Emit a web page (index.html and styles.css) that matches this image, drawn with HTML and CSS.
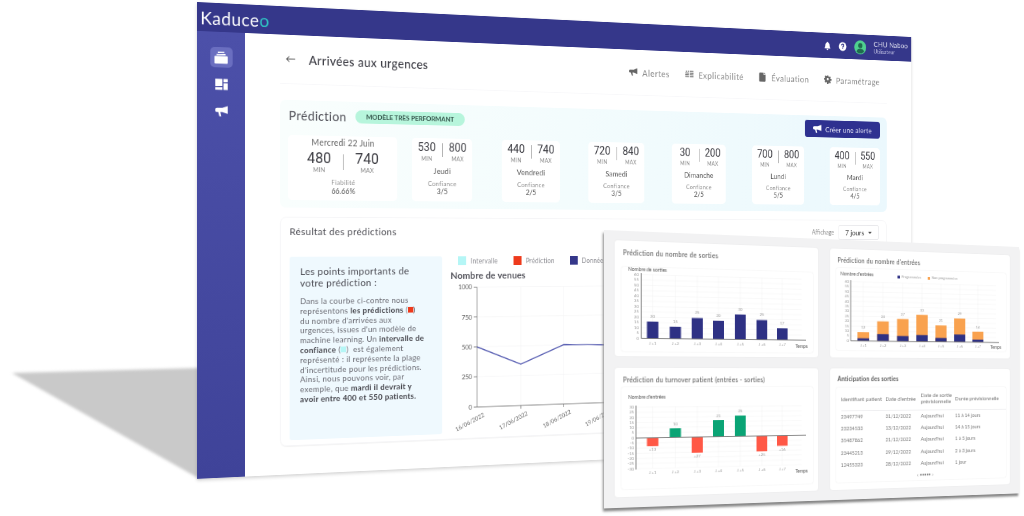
FILE: index.html
```html
<!DOCTYPE html>
<html lang="fr">
<head>
<meta charset="utf-8">
<title>Kaduceo</title>
<link rel="stylesheet" href="styles.css">
</head>
<body>
<div class="stage">
  <svg class="cast-shadow" width="200" height="130" viewBox="0 0 200 130"><polygon points="12,13 200,8 200,119"/></svg>

  <section class="win win-main">
    <header class="topbar">
      <div class="logo">Kaduce<span class="logo-o">o</span></div>
      <div class="top-tools">
        <svg class="ico-top" viewBox="0 0 12 12"><path d="M6 1c.5 0 .8.3.8.8C8.300 2.200 9 3.400 9 5c0 2 .6 3 1.300 3.700V9.300H1.700V8.700C2.400 8 3 7 3 5c0-1.600.7-2.800 2.200-3.200C5.200 1.300 5.500 1 6 1zM4.800 10h2.400a1.200 1.200 0 0 1-2.400 0z"/></svg>
        <svg class="ico-top" viewBox="0 0 12 12"><circle cx="6" cy="6" r="5.500"/><path class="q" d="M4.300 4.700C4.300 3.700 5 3.100 6 3.100s1.700.6 1.700 1.500c0 1.300-1.700 1.300-1.700 2.600M6 8.200v1"/></svg>
        <svg class="avatar" viewBox="0 0 20 20"><circle cx="10" cy="10" r="10" class="av-bg"/><circle cx="10" cy="7.500" r="3.500" class="av-fg"/><path class="av-fg" d="M3.500 16c1-3 3.500-4 6.500-4s5.500 1 6.500 4c-1.700 1.700-4 2.500-6.500 2.500S5.200 17.700 3.500 16z"/></svg>
        <div class="user"><div class="user-name">CHU Naboo</div><div class="user-role">Utilisateur</div></div>
      </div>
    </header>
    <div class="body">
      <nav class="side">
        <div class="side-item side-active">
          <svg viewBox="0 0 16 14"><path d="M4 0h8v1.500H4zM2.500 2.500h11V4h-11zM1 5h14a1 1 0 0 1 1 1v7a1 1 0 0 1-1 1H1a1 1 0 0 1-1-1V6a1 1 0 0 1 1-1z"/></svg>
        </div>
        <div class="side-item">
          <svg viewBox="0 0 16 14"><path d="M0 0h9v9H0zM10.500 0H16v4h-5.500zM10.500 5.500H16V14h-5.500zM0 10.500h9V14H0z"/></svg>
        </div>
        <div class="side-item">
          <svg viewBox="0 0 16 14"><path d="M16 0v10L9 7.800H6.500L7.800 13H5.200L3.800 7.800H2a2 2 0 0 1-2-2V4.500a2 2 0 0 1 2-2h7z"/></svg>
        </div>
      </nav>
      <main class="content">
        <div class="page-head">
          <svg class="back" viewBox="0 0 14 10"><path d="M13 5H1.500M5 1.500 1.500 5 5 8.500"/></svg>
          <h1 class="page-title">Arrivées aux urgences</h1>
          <div class="tabs">
            <div class="tab"><svg viewBox="0 0 16 14"><path d="M16 0v10L9 7.800H6.500L7.800 13H5.200L3.800 7.800H2a2 2 0 0 1-2-2V4.500a2 2 0 0 1 2-2h7z"/></svg>Alertes</div>
            <div class="tab"><svg viewBox="0 0 16 14"><path d="M1 1h2v1.500H1zM5 1h2v1.500H5zM0 4h7v1.500H0zM9 4h7v1.500H9zM0 7h7v1.500H0zM9 7h7v1.500H9zM0 10h7v1.500H0zM9 10h7v1.500H9zM9 1h7v1.500H9z"/></svg>Explicabilité</div>
            <div class="tab"><svg viewBox="0 0 14 16"><path d="M2 0h7v4h4v10a2 2 0 0 1-2 2H2a2 2 0 0 1-2-2V2a2 2 0 0 1 2-2zM10 0l3.500 3H10z"/></svg>Évaluation</div>
            <div class="tab"><svg viewBox="0 0 16 16"><path fill-rule="evenodd" d="M6.500 0h3l.5 2.300 1.300.6 2-1.300 2.100 2.100-1.300 2 .6 1.300 2.300.5v3l-2.300.5-.6 1.300 1.300 2-2.100 2.100-2-1.300-1.300.6-.5 2.300h-3L6 14l-1.300-.6-2 1.300L.6 12.600l1.300-2-.6-1.300L-1 8.800v-3l2.300-.5.6-1.300-1.300-2L2.700 0l2 1.300L6 .7zM8 5a2.500 2.500 0 1 0 0 5 2.500 2.500 0 0 0 0-5z" transform="translate(1 .5) scale(.875)"/></svg>Paramétrage</div>
          </div>
        </div>

        <section class="panel">
          <div class="panel-head">
            <h2 class="panel-title">Prédiction</h2>
            <span class="badge">MODÈLE TRÈS PERFORMANT</span>
            <button class="btn-alert"><svg viewBox="0 0 16 14"><path d="M16 0v10L9 7.800H6.500L7.800 13H5.200L3.800 7.800H2a2 2 0 0 1-2-2V4.500a2 2 0 0 1 2-2h7z"/></svg>Créer une alerte</button>
          </div>
          <div class="days">
            <article class="day day-main">
              <div class="day-date">Mercredi 22 Juin</div>
              <div class="range range-big"><div class="rng"><b>480</b><i>MIN</i></div><span class="sep"></span><div class="rng"><b>740</b><i>MAX</i></div></div>
              <div class="conf">Fiabilité</div>
              <div class="conf-val">66.66%</div>
            </article>
            <article class="day">
              <div class="range"><div class="rng"><b>530</b><i>MIN</i></div><span class="sep"></span><div class="rng"><b>800</b><i>MAX</i></div></div>
              <div class="day-name">Jeudi</div><div class="conf">Confiance</div><div class="conf-val">3/5</div>
            </article>
            <article class="day">
              <div class="range"><div class="rng"><b>440</b><i>MIN</i></div><span class="sep"></span><div class="rng"><b>740</b><i>MAX</i></div></div>
              <div class="day-name">Vendredi</div><div class="conf">Confiance</div><div class="conf-val">2/5</div>
            </article>
            <article class="day">
              <div class="range"><div class="rng"><b>720</b><i>MIN</i></div><span class="sep"></span><div class="rng"><b>840</b><i>MAX</i></div></div>
              <div class="day-name">Samedi</div><div class="conf">Confiance</div><div class="conf-val">3/5</div>
            </article>
            <article class="day">
              <div class="range"><div class="rng"><b>30</b><i>MIN</i></div><span class="sep"></span><div class="rng"><b>200</b><i>MAX</i></div></div>
              <div class="day-name">Dimanche</div><div class="conf">Confiance</div><div class="conf-val">2/5</div>
            </article>
            <article class="day">
              <div class="range"><div class="rng"><b>700</b><i>MIN</i></div><span class="sep"></span><div class="rng"><b>800</b><i>MAX</i></div></div>
              <div class="day-name">Lundi</div><div class="conf">Confiance</div><div class="conf-val">5/5</div>
            </article>
            <article class="day">
              <div class="range"><div class="rng"><b>400</b><i>MIN</i></div><span class="sep"></span><div class="rng"><b>550</b><i>MAX</i></div></div>
              <div class="day-name">Mardi</div><div class="conf">Confiance</div><div class="conf-val">4/5</div>
            </article>
          </div>
        </section>

        <section class="result">
          <div class="result-head">
            <h2 class="result-title">Résultat des prédictions</h2>
            <span class="aff-label">Affichage</span>
            <div class="select">7 jours <span class="caret"></span></div>
          </div>
          <div class="result-body">
            <aside class="info">
              <h3 class="info-title">Les points importants de<br>votre prédiction :</h3>
              <p class="info-text">Dans la courbe ci-contre nous<br>représentons <strong>les prédictions</strong> (<span class="chip chip-red"></span>)<br>du nombre d'arrivées aux<br>urgences, issues d'un modèle de<br>machine learning. Un <strong>intervalle de</strong><br><strong>confiance</strong> (<span class="chip chip-cyan"></span>) &nbsp;est également<br>représenté : il représente la plage<br>d'incertitude pour les prédictions.<br>Ainsi, nous pouvons voir, par<br>exemple, que <strong>mardi il devrait y</strong><br><strong>avoir entre 400 et 550 patients.</strong></p>
            </aside>
            <div class="graph">
              <div class="legend">
                <span class="leg"><span class="sw sw-cyan"></span>Intervalle</span>
                <span class="leg"><span class="sw sw-red"></span>Prédiction</span>
                <span class="leg"><span class="sw sw-blue"></span>Données</span>
              </div>
              <div class="graph-title">Nombre de venues</div>
              <svg class="line-chart" width="320" height="200" viewBox="0 0 320 200">
                <path class="grid" d="M35.500 7.500H320M35.500 44.700H320M35.500 82H320M35.500 119.300H320M95 7.500V157M154.500 7.500V157M214 7.500V157M273.500 7.500V157"/>
                <path class="axis" d="M35.500 7.500V157H320M31 7.500h4.500M31 44.700h4.500M31 82h4.500M31 119.300h4.500M31 157h4.500M95 157v4M154.500 157v4M214 157v4M273.500 157v4"/>
                <g class="tick-y">
                  <text x="29" y="10.500">1000</text><text x="29" y="47.700">750</text><text x="29" y="85">500</text><text x="29" y="122.300">250</text><text x="29" y="160">0</text>
                </g>
                <g class="tick-x">
                  <text transform="translate(46 169) rotate(-25)">16/06/2022</text>
                  <text transform="translate(105 169) rotate(-25)">17/06/2022</text>
                  <text transform="translate(165 169) rotate(-25)">18/06/2022</text>
                  <text transform="translate(224 169) rotate(-25)">19/06/2022</text>
                </g>
                <polyline class="curve" points="35.500,82 95,105 154.500,81.500 214,83 273.500,84 320,84"/>
              </svg>
            </div>
          </div>
        </section>
      </main>
    </div>
  </section>

  <section class="win win-over">
    <article class="card card-tall">
      <h4 class="card-title">Prédiction du nombre de sorties</h4>
      <svg class="mini mini-a" width="209" height="87" viewBox="0 0 209 87">
        <path class="grid" d="M20.500 7.500H196M20.500 13H196M20.500 18.500H196M20.500 24H196M20.500 29.500H196M20.500 35H196M20.500 40.500H196M20.500 46H196M20.500 51.500H196M20.500 57H196M20.500 62.500H196M20.500 68H196M32.500 7.500V73.500M56.500 7.500V73.500M80 7.500V73.500M103 7.500V73.500M127 7.500V73.500M151 7.500V73.500M174 7.500V73.500"/>
        <g class="bar-blue"><rect x="26.500" y="56" width="12" height="17.500"/><rect x="50.500" y="61" width="12" height="12.500"/><rect x="74" y="51.500" width="12" height="22"/><rect x="97" y="54" width="12" height="19.500"/><rect x="121" y="47" width="12" height="26.500"/><rect x="145" y="52.500" width="12" height="21"/><rect x="168" y="61" width="12" height="12.500"/></g>
        <path class="axis" d="M20.500 6V73.500H201"/>
        <text class="mini-lab" x="7" y="3.500">Nombre de sorties</text>
        <g class="tick-y mini-tick"><text x="18" y="9">60</text><text x="18" y="14.500">55</text><text x="18" y="20">50</text><text x="18" y="25.500">45</text><text x="18" y="31">40</text><text x="18" y="36.500">35</text><text x="18" y="42">30</text><text x="18" y="47.500">25</text><text x="18" y="53">20</text><text x="18" y="58.500">15</text><text x="18" y="64">10</text><text x="18" y="69.500">5</text><text x="18" y="75">0</text></g>
        <g class="mid mini-tick"><text x="32.500" y="52">20</text><text x="56.500" y="57">15</text><text x="80" y="47.500">25</text><text x="103" y="50">20</text><text x="127" y="43">30</text><text x="151" y="48.500">25</text><text x="174" y="57">17</text></g>
        <g class="mid mini-tick"><text x="32.500" y="80">J +1</text><text x="56.500" y="80">J +2</text><text x="80" y="80">J +3</text><text x="103" y="80">J +4</text><text x="127" y="80">J +5</text><text x="151" y="80">J +6</text><text x="174" y="80">J +7</text></g>
        <text class="mini-lab" x="189" y="82">Temps</text>
      </svg>
    </article>
    <article class="card">
      <h4 class="card-title">Prédiction du nombre d'entrées</h4>
      <svg class="mini" width="209" height="90" viewBox="0 0 209 90">
        <path class="grid" d="M17 14.700H196M17 20H196M17 25.500H196M17 31H196M17 36.200H196M17 41.600H196M17 47H196M17 52.500H196M17 58H196M17 63.400H196M17 68.800H196M17 74.200H196M32 14.700V79.700M55.500 14.700V79.700M79.500 14.700V79.700M103 14.700V79.700M126.500 14.700V79.700M150 14.700V79.700M173 14.700V79.700"/>
        <g class="bar-orange"><rect x="25" y="70" width="14" height="9.700"/><rect x="48.500" y="57.700" width="14" height="22"/><rect x="72.500" y="54.700" width="14" height="25"/><rect x="96" y="49.700" width="14" height="30"/><rect x="119.500" y="61.200" width="14" height="18.500"/><rect x="143" y="53" width="14" height="26.700"/><rect x="166" y="67.700" width="14" height="12"/></g>
        <g class="bar-blue"><rect x="25" y="76.700" width="14" height="3"/><rect x="48.500" y="71.900" width="14" height="7.800"/><rect x="72.500" y="73.700" width="14" height="6"/><rect x="96" y="72.300" width="14" height="7.400"/><rect x="119.500" y="75.300" width="14" height="4.400"/><rect x="143" y="71.200" width="14" height="8.500"/><rect x="166" y="76.700" width="14" height="3"/></g>
        <path class="axis" d="M17 13V79.700H200"/>
        <text class="mini-lab" x="5" y="8">Nombre d'entrées</text>
        <rect class="fill-blue" x="73" y="6.500" width="3" height="3"/><text class="mini-tick legend-mini" x="78" y="9.500">Programmées</text>
        <rect class="fill-orange" x="110" y="7" width="3" height="3"/><text class="mini-tick legend-mini" x="115" y="9.500">Non programmées</text>
        <g class="tick-y mini-tick"><text x="15" y="16">60</text><text x="15" y="21.500">55</text><text x="15" y="27">50</text><text x="15" y="32.500">45</text><text x="15" y="38">40</text><text x="15" y="43">35</text><text x="15" y="48.500">30</text><text x="15" y="54">25</text><text x="15" y="59.500">20</text><text x="15" y="65">15</text><text x="15" y="70">10</text><text x="15" y="75.500">5</text><text x="15" y="81">0</text></g>
        <g class="mid mini-tick"><text x="32" y="66">12</text><text x="55.500" y="54">24</text><text x="79.500" y="51">27</text><text x="103" y="46">33</text><text x="126.500" y="57.500">21</text><text x="150" y="49.500">29</text><text x="173" y="64">14</text></g>
        <g class="mid mini-tick"><text x="32" y="86">J +1</text><text x="55.500" y="86">J +2</text><text x="79.500" y="86">J +3</text><text x="103" y="86">J +4</text><text x="126.500" y="86">J +5</text><text x="150" y="86">J +6</text><text x="173" y="86">J +7</text></g>
        <text class="mini-lab" x="189" y="87">Temps</text>
      </svg>
    </article>
    <article class="card">
      <h4 class="card-title">Prédiction du turnover patient (entrées - sorties)</h4>
      <svg class="mini" width="209" height="105" viewBox="0 0 209 105">
        <path class="grid" d="M15 20.700H196M15 26H196M15 31.300H196M15 36.600H196M15 41.900H196M15 47.200H196M15 57.800H196M15 63.100H196M15 68.400H196M15 73.700H196M15 79H196M15 84.300H196M32.500 20V84M56.500 20V84M80 20V84M103 20V84M127 20V84M151 20V84M174 20V84"/>
        <g class="bar-red"><rect x="26.500" y="52.500" width="12" height="8.700"/><rect x="74" y="52.500" width="12" height="16.500"/><rect x="145" y="52.500" width="12" height="16.500"/><rect x="168" y="52.500" width="12" height="11"/></g>
        <g class="bar-green"><rect x="50.500" y="43" width="12" height="9.500"/><rect x="97" y="35" width="12" height="17.500"/><rect x="121" y="30.500" width="12" height="22"/></g>
        <path class="axis" d="M15 19V85M15 52.500H201"/>
        <text class="mini-lab" x="7" y="12">Nombre d'entrées</text>
        <g class="tick-y mini-tick"><text x="13" y="22">30</text><text x="13" y="27.300">25</text><text x="13" y="32.600">20</text><text x="13" y="37.900">15</text><text x="13" y="43.200">10</text><text x="13" y="48.500">5</text><text x="13" y="54">0</text><text x="13" y="59.100">-5</text><text x="13" y="64.400">-10</text><text x="13" y="69.700">-15</text><text x="13" y="75">-20</text><text x="13" y="80.300">-25</text><text x="13" y="85.600">-30</text></g>
        <g class="mid mini-tick"><text x="32.500" y="66">+13</text><text x="56.500" y="40">10</text><text x="80" y="74">+27</text><text x="103" y="32">21</text><text x="127" y="27">25</text><text x="151" y="74">+25</text><text x="174" y="69">+16</text></g>
        <g class="mid mini-tick"><text x="32.500" y="90">J +1</text><text x="56.500" y="90">J +2</text><text x="80" y="90">J +3</text><text x="103" y="90">J +4</text><text x="127" y="90">J +5</text><text x="151" y="90">J +6</text><text x="174" y="90">J +7</text></g>
        <text class="mini-lab" x="189" y="93">Temps</text>
      </svg>
    </article>
    <article class="card">
      <h4 class="card-title card-title-strong">Anticipation des sorties</h4>
      <div class="table-box">
        <table class="tbl">
          <thead><tr><th>Identifiant patient</th><th>Date d'entrée</th><th>Date de sortie prévisionnelle</th><th>Durée prévisionnelle</th></tr></thead>
          <tbody>
            <tr><td>23497749</td><td>31/12/2022</td><td>Aujourd'hui</td><td>11 à 14 jours</td></tr>
            <tr><td>23234533</td><td>13/12/2022</td><td>Aujourd'hui</td><td>14 à 15 jours</td></tr>
            <tr><td>35487862</td><td>21/12/2022</td><td>Aujourd'hui</td><td>1 à 5 jours</td></tr>
            <tr><td>23445213</td><td>29/12/2022</td><td>Aujourd'hui</td><td>2 à 3 jours</td></tr>
            <tr><td>12455323</td><td>28/12/2022</td><td>Aujourd'hui</td><td>1 jour</td></tr>
          </tbody>
        </table>
        <div class="pager">‹ <span class="dots">•••••</span> ›</div>
      </div>
    </article>
  </section>
</div>
</body>
</html>
```
FILE: styles.css
```css
* { box-sizing: border-box; }
html, body { margin: 0; padding: 0; background: #fff; }
body { font-family: "Lato", "Liberation Sans", sans-serif; color: #555; }
.stage { position: relative; width: 1024px; height: 516px; overflow: hidden; background: #fff; }

.cast-shadow { position: absolute; left: 0; top: 360px; filter: blur(1.5px); }
.cast-shadow polygon { fill: #c9c9c9; }

.win { position: absolute; transform-origin: 0 0; background: #fff; }
.win-main {
  left: 197px; top: 2px; width: 1000px; height: 561px;
  transform: matrix3d(.835,.0409,0,.000169, 0,.85,0,0, 0,0,1,0, 0,0,0,1);
  box-shadow: 0 2px 4px rgba(0,0,0,.18);
  filter: blur(.7px);
  display: flex; flex-direction: column;
}
.win-over {
  left: 604px; top: 230px; width: 480px; height: 285px;
  transform: matrix3d(.977,.04,0,.000271, 0,.977,0,0, 0,0,1,0, 0,0,0,1);
  background: #f2f2f3;
  box-shadow: -1.5px 2.5px 2.5px #858585;
  padding: 10px 11px 11px;
  display: grid; grid-template-columns: 222px 221px; grid-template-rows: 119px 133px; column-gap: 14px; row-gap: 12px;
  filter: blur(.75px);
}

.topbar { height: 34px; flex: none; background: #35378a; display: flex; align-items: center; padding: 0 4px 0 4px; }
.logo { font-size: 21px; font-weight: 400; color: #fff; letter-spacing: .5px; line-height: 1; }
.logo-o { color: #2fc6c4; }
.top-tools { margin-left: auto; display: flex; align-items: center; }
.ico-top { width: 13px; height: 13px; fill: #fff; margin-right: 11px; }
.ico-top .q { fill: none; stroke: #35378a; stroke-width: 1.4; }
.avatar { width: 19px; height: 19px; margin-right: 12px; margin-left: 1px; }
.av-bg { fill: #4fd08f; }
.av-fg { fill: #1f6b4e; }
.user { width: 57px; }
.user-name { font-size: 10px; line-height: 11px; color: #e6e6f4; letter-spacing: .2px; white-space: nowrap; }
.user-role { font-size: 7.5px; line-height: 9px; color: #b9bade; }

.body { flex: 1; display: flex; min-height: 0; }
.side { width: 58px; flex: none; background: linear-gradient(#4c50a9, #3f4399); padding-top: 18px; display: flex; flex-direction: column; align-items: center; gap: 8px; }
.side-item { width: 27px; height: 24px; display: flex; align-items: center; justify-content: center; }
.side-item svg { width: 15px; height: 14px; fill: #fff; }
.side-active { background: #6a6ec0; border-radius: 5px; }
.side-active svg { width: 16px; height: 15px; }

.content { flex: 1; min-width: 0; padding: 0 40px 0 43px; }
.page-head { height: 59px; display: flex; align-items: center; padding: 0 11px 0 7px; border-bottom: 1px solid #f8f8fa; }
.back { width: 13px; height: 10px; fill: none; stroke: #555; stroke-width: 1.1; flex: none; }
.page-title { margin: 0 0 0 16px; font-size: 15px; font-weight: 500; letter-spacing: .4px; color: #3d3d45; }
.tabs { margin-left: auto; display: flex; gap: 23px; }
.tab { display: flex; align-items: center; gap: 7px; font-size: 11.5px; color: #8a8a8a; letter-spacing: .6px; white-space: nowrap; }
.tab svg { width: 12px; height: 12px; fill: #666; flex: none; }

.panel { margin-top: 19px; height: 129px; border-radius: 7px; background: linear-gradient(90deg, #f9fefd, #f3fcfd 45%, #ebf8fd); padding: 6px 9px 9px 10px; display: flex; flex-direction: column; }
.panel-head { height: 23px; display: flex; align-items: center; margin-bottom: 13px; }
.panel-title { margin: 0; padding-left: 1px; font-size: 15.2px; font-weight: 400; letter-spacing: .5px; color: #4a4a52; }
.badge { margin-left: 11px; height: 16px; width: 143px; border-radius: 8px; background: #b7f5dc; font-size: 8.3px; font-weight: 700; color: #33544a; display: flex; align-items: center; justify-content: center; white-space: nowrap; }
.btn-alert { margin-left: auto; margin-right: 2px; height: 23px; width: 119px; border: 0; border-radius: 4px; background: #2e3190; color: #e8e8f8; font-family: inherit; font-size: 10px; letter-spacing: .2px; display: flex; align-items: center; justify-content: center; gap: 6px; padding: 0; }
.btn-alert svg { width: 13px; height: 12px; fill: #fff; }

.days { flex: 1; display: flex; gap: 40px; }
.day { width: 80px; height: 78px; flex: none; background: #fff; border-radius: 5px; display: flex; flex-direction: column; align-items: center; padding-top: 3px; }
.day-main { width: 139px; padding-top: 2px; margin-right: -21px; }
.day-date { font-size: 10.5px; line-height: 12px; color: #666; letter-spacing: .2px; }
.range { display: flex; align-items: flex-start; justify-content: center; width: 100%; }
.rng { display: flex; flex-direction: column; align-items: center; width: 36px; }
.rng b { font-family: "Roboto", "Liberation Sans", sans-serif; font-weight: 400; font-size: 14px; line-height: 17px; color: #3a3a40; }
.rng i { font-style: normal; font-size: 7px; line-height: 9px; margin-top: 1px; color: #888; letter-spacing: .2px; }
.sep { width: 1px; height: 17px; background: #aaa; margin: 3px 2px 0; }
.range-big { margin-top: 3px; }
.range-big .rng { width: 50px; }
.range-big .rng b { font-size: 18px; line-height: 20px; }
.range-big .rng i { margin-top: 0; font-size: 7.5px; line-height: 9px; }
.range-big .sep { height: 19px; margin: 5px 5px 0; }
.day-name { font-size: 9.5px; line-height: 11px; margin-top: 5px; color: #555; letter-spacing: .2px; }
.conf { font-size: 8px; line-height: 10px; color: #8f8f8f; margin-top: 5px; letter-spacing: .3px; }
.conf-val { font-size: 9px; line-height: 9px; color: #555; }
.day-main .conf-val { margin-top: 1px; }

.result { margin-top: 11px; height: 275px; border: 1px solid #f5f5f7; border-radius: 8px; box-shadow: 0 1px 1px rgba(0,0,0,.05); padding: 6px 12px 6px 11px; display: flex; flex-direction: column; }
.result-head { display: flex; align-items: center; height: 20px; }
.result-title { margin: 0; font-size: 12.1px; font-weight: 400; letter-spacing: .4px; color: #4b4b52; }
.aff-label { margin-left: auto; font-size: 8.5px; color: #888; margin-right: 7px; }
.select { width: 64px; height: 20px; border: 1px solid #e9e9ec; border-radius: 2px; background: #fff; font-size: 10px; color: #444; display: flex; align-items: center; justify-content: center; gap: 7px; }
.caret { width: 0; height: 0; border-left: 3px solid transparent; border-right: 3px solid transparent; border-top: 3px solid #444; }
.result-body { flex: 1; display: flex; margin-top: 21px; min-height: 0; gap: 11px; }
.info { width: 196px; height: 220px; flex: none; background: #eff9fe; border-radius: 3px; padding: 11px 5px 0 13px; }
.info-title { margin: 0; font-size: 12.3px; font-weight: 400; line-height: 14px; letter-spacing: .3px; color: #4a4a52; }
.info-text { margin: 9px 0 0; font-size: 10px; line-height: 11.8px; letter-spacing: .28px; color: #6a6a72; white-space: nowrap; }
.info-text strong { font-weight: 700; color: #45454c; }
.chip { display: inline-block; width: 7px; height: 7px; vertical-align: -.5px; }
.chip-red { background: #ee3a1c; }
.chip-cyan { background: #b5f6f6; }

.graph { flex: 1; min-width: 0; overflow: hidden; }
.legend { display: flex; gap: 21px; padding-left: 10px; height: 11px; align-items: center; white-space: nowrap; }
.leg { display: flex; align-items: center; gap: 6px; font-size: 8.5px; letter-spacing: .2px; color: #8a8a90; }
.sw { width: 11px; height: 11px; flex: none; }
.sw-cyan { background: #b5f6f6; }
.sw-red { background: #ee3a1c; }
.sw-blue { background: #35378a; }
.graph-title { margin-top: 6px; height: 14px; line-height: 14px; font-size: 12px; font-weight: 700; color: #56565e; letter-spacing: .1px; }
.line-chart { display: block; }
.line-chart .tick-y text { font-size: 8px; fill: #555; text-anchor: end; }
.line-chart .tick-x text { font-size: 7.6px; fill: #666; text-anchor: end; }
.grid { fill: none; stroke: #f1f1f3; stroke-width: .6; }
.axis { fill: none; stroke: #666; stroke-width: .8; }
.curve { fill: none; stroke: #5c62b4; stroke-width: 1.4; }

.card { background: #fff; border-radius: 3px; padding: 6px 6.5px 8px; display: flex; flex-direction: column; min-width: 0; box-shadow: 0 0 2px rgba(0,0,0,.06); }
.card-tall { padding-bottom: 5px; }
.card-title { margin: 0; padding-left: 2px; font-size: 6.8px; line-height: 12px; font-weight: 400; letter-spacing: .2px; color: #555; white-space: nowrap; }
.card-title-strong { font-weight: 700; font-size: 6.5px; }
.mini { display: block; margin-top: auto; box-shadow: 0 0 1.5px rgba(0,0,0,.12); border-radius: 2px; background: #fff; }
.mini text { font-family: "Lato", "Liberation Sans", sans-serif; }
.mini .grid { stroke: #f0f0f0; stroke-width: .4; }
.mini .axis { stroke: #777; stroke-width: .9; }
.mini-lab { font-size: 5px; fill: #555; }
.mini-tick { font-size: 4.2px; fill: #999; }
.legend-mini { font-size: 4px; }
.tick-y { text-anchor: end; }
.mid { text-anchor: middle; }
.bar-blue rect, .fill-blue { fill: #2e3184; }
.bar-orange rect, .fill-orange { fill: #f9a24f; }
.bar-red rect { fill: #ff5846; }
.bar-green rect { fill: #0aa475; }

.table-box { margin-top: auto; width: 209px; height: 104px; padding-left: 6px; border-radius: 2px; box-shadow: 0 0 1.5px rgba(0,0,0,.12); display: flex; flex-direction: column; }
.tbl { width: 100%; border-collapse: collapse; table-layout: fixed; font-size: 5.6px; color: #777; }
.tbl th { font-weight: 400; font-size: 6.2px; text-align: left; height: 25px; vertical-align: middle; line-height: 7px; border-bottom: 1px solid #efeff1; padding: 0; }
.tbl td { height: 13.2px; padding: 0; white-space: nowrap; }
.tbl tr > :first-child { width: 53px; }
.tbl tr > :nth-child(2) { width: 43px; }
.tbl tr > :nth-child(3) { width: 42.5px; }
.pager { margin-top: auto; margin-bottom: 2px; text-align: center; font-size: 6px; line-height: 8px; color: #777; }
.dots { letter-spacing: -.2px; font-size: 5px; }
```
